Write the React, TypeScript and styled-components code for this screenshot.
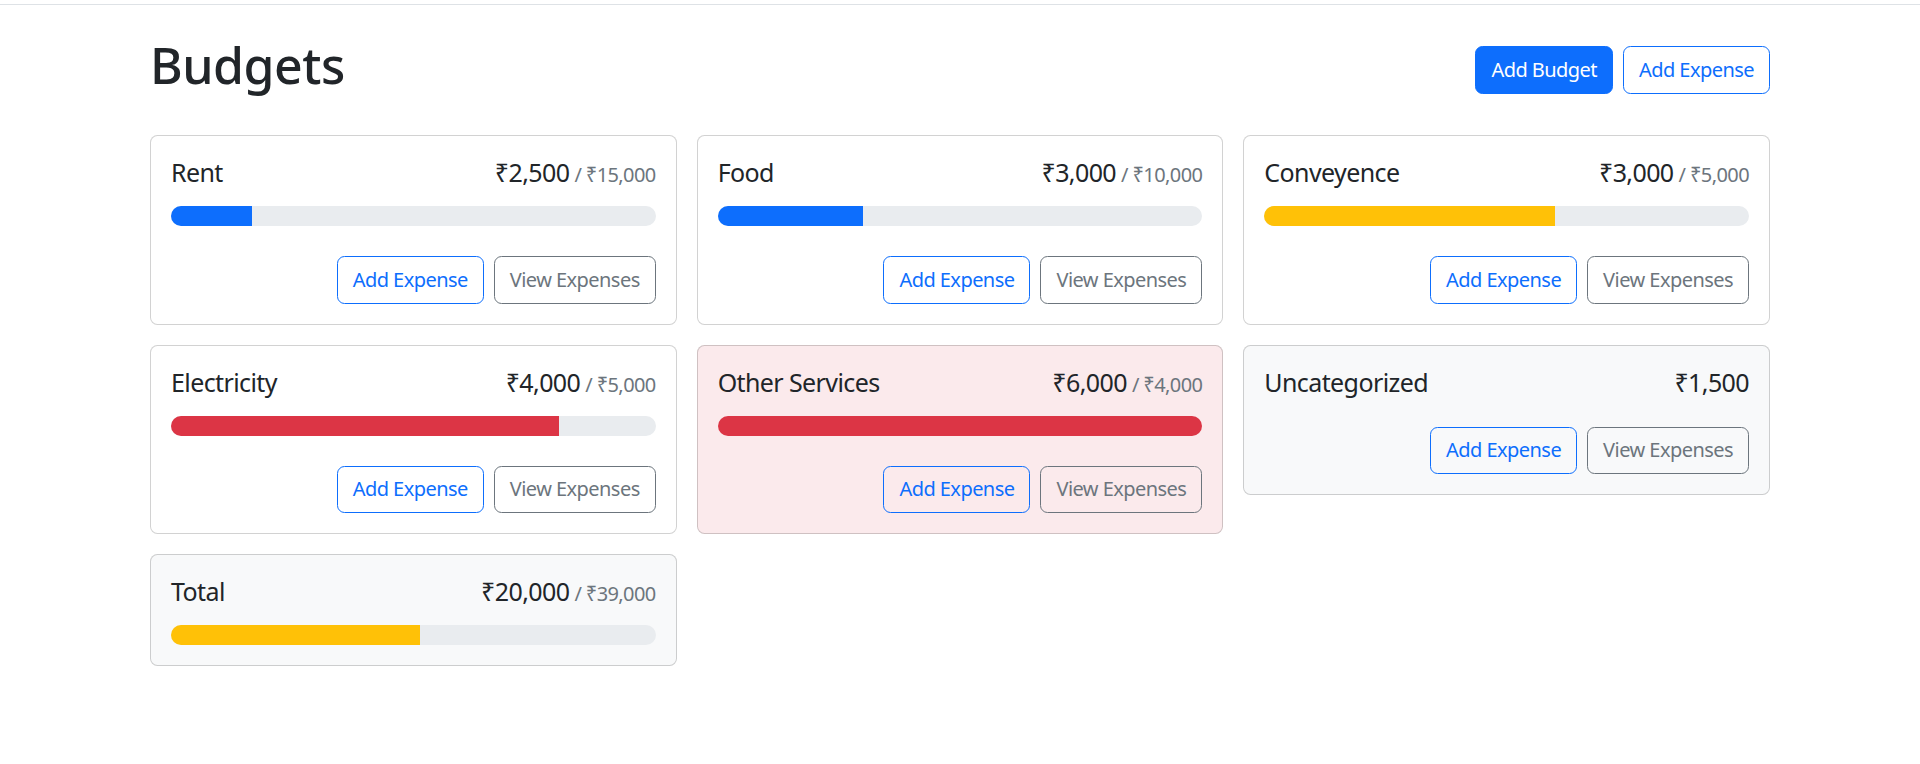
import styled, { createGlobalStyle } from 'styled-components';

const GlobalStyle = createGlobalStyle`
  * {
    box-sizing: border-box;
  }

  body {
    margin: 0;
    background: #fff;
    color: #212529;
    font-family: "Noto Sans", "Open Sans", sans-serif;
    font-size: 20px;
    line-height: 1.5;
  }
`;

type Variant = 'primary' | 'outline-primary' | 'outline-secondary';
type Tone = 'white' | 'light' | 'danger';

const barColors = {
  primary: '#0d6efd',
  warning: '#ffc107',
  danger: '#dc3545',
};

const toneColors: Record<Tone, string> = {
  white: '#fff',
  light: '#f8f9fa',
  danger: 'rgba(220, 53, 69, 0.1)',
};

const budgets = [
  { name: 'Rent', amount: 2500, max: 15000 },
  { name: 'Food', amount: 3000, max: 10000 },
  { name: 'Conveyence', amount: 3000, max: 5000 },
  { name: 'Electricity', amount: 4000, max: 5000 },
  { name: 'Other Services', amount: 6000, max: 4000 },
];

const formatRupee = (value: number) => '₹' + value.toLocaleString('en-IN');

const barVariant = (amount: number, max: number) => {
  const ratio = amount / max;
  if (ratio < 0.5) return barColors.primary;
  if (ratio < 0.75) return barColors.warning;
  return barColors.danger;
};

const App = () => {
  return (
    <>
      <GlobalStyle />
      <TopLine />
      <Container>
        <Header>
          <PageTitle>Budgets</PageTitle>
          <Button $variant="primary">Add Budget</Button>
          <Button $variant="outline-primary">Add Expense</Button>
        </Header>
        <Grid>
          {budgets.map((b) => (
            <BudgetCard
              key={b.name}
              name={b.name}
              amount={b.amount}
              max={b.max}
              tone={b.amount > b.max ? 'danger' : 'white'}
            />
          ))}
          <BudgetCard name="Uncategorized" amount={1500} tone="light" />
          <BudgetCard
            name="Total"
            amount={20000}
            max={39000}
            tone="light"
            hideButtons
          />
        </Grid>
      </Container>
    </>
  );
};

type BudgetCardProps = {
  name: string;
  amount: number;
  max?: number;
  tone: Tone;
  hideButtons?: boolean;
};

const BudgetCard = ({ name, amount, max, tone, hideButtons }: BudgetCardProps) => {
  const pct = max ? Math.min(100, (amount / max) * 100) : 0;

  return (
    <Card $tone={tone}>
      <CardTitle $spaced={!!max}>
        <span>{name}</span>
        <span>
          {formatRupee(amount)}
          {max && <MaxAmount>/ {formatRupee(max)}</MaxAmount>}
        </span>
      </CardTitle>
      {max && (
        <Progress>
          <ProgressFill
            $color={barVariant(amount, max)}
            style={{ width: `${pct}%` }}
          />
        </Progress>
      )}
      {!hideButtons && (
        <Actions>
          <Button $variant="outline-primary">Add Expense</Button>
          <Button $variant="outline-secondary">View Expenses</Button>
        </Actions>
      )}
    </Card>
  );
};

const TopLine = styled.div`
  height: 5px;
  border-bottom: 1px solid #dee2e6;
`;

const Container = styled.div`
  max-width: 1650px;
  margin: 30px auto 0;
  padding: 0 15px;
`;

const Header = styled.div`
  display: flex;
  align-items: center;
  gap: 10px;
  margin-bottom: 30px;
`;

const PageTitle = styled.h1`
  margin: 0 auto 10px 0;
  font-size: 50px;
  font-weight: 500;
  line-height: 1.2;
  letter-spacing: -0.5px;
`;

const Grid = styled.div`
  display: grid;
  grid-template-columns: repeat(3, 1fr);
  gap: 20px;
  align-items: start;
`;

const Card = styled.div<{ $tone: Tone }>`
  background: ${(p) => toneColors[p.$tone]};
  border: 1px solid rgba(0, 0, 0, 0.175);
  border-radius: 7.5px;
  padding: 20px;
`;

const CardTitle = styled.div<{ $spaced: boolean }>`
  display: flex;
  justify-content: space-between;
  align-items: baseline;
  font-size: 25px;
  line-height: 1.2;
  letter-spacing: -0.6px;
  padding-top: 1px;
  margin-bottom: ${(p) => (p.$spaced ? '19px' : '0')};
`;

const MaxAmount = styled.span`
  margin-left: 5px;
  font-size: 20px;
  color: #6c757d;
`;

const Progress = styled.div`
  display: flex;
  height: 20px;
  background: #e9ecef;
  border-radius: 10px;
  overflow: hidden;
`;

const ProgressFill = styled.div<{ $color: string }>`
  height: 100%;
  background: ${(p) => p.$color};
`;

const Actions = styled.div`
  display: flex;
  justify-content: flex-end;
  gap: 10px;
  margin-top: 30px;
`;

const buttonStyles: Record<Variant, string> = {
  primary: 'background: #0d6efd; border-color: #0d6efd; color: #fff;',
  'outline-primary': 'background: transparent; border-color: #0d6efd; color: #0d6efd;',
  'outline-secondary': 'background: transparent; border-color: #6c757d; color: #6c757d;',
};

const Button = styled.button<{ $variant: Variant }>`
  font-family: inherit;
  font-size: 20px;
  line-height: 1.5;
  letter-spacing: -0.55px;
  padding: 7.75px 15px;
  border: 1px solid;
  border-radius: 7.5px;
  cursor: pointer;
  ${(p) => buttonStyles[p.$variant]}
`;

export default App;
